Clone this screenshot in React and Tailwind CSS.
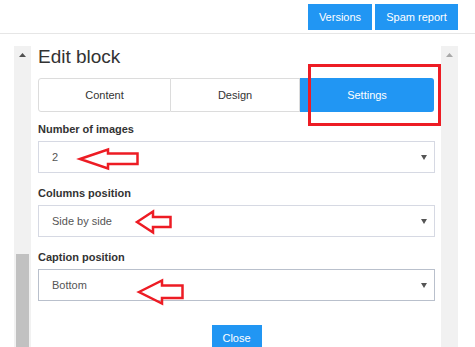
import React from "react";

const fields = [
    {label: "Number of images", value: "2"},
    {label: "Columns position", value: "Side by side"},
    {label: "Caption position", value: "Bottom", focused: true},
];

function UpArrow({className}) {
    return (
        <svg width="7" height="4" viewBox="0 0 7 4" className={className}>
            <path d="M0 4L3.5 0L7 4Z" fill="currentColor"/>
        </svg>
    );
}

function FakeSelect({value, focused}) {
    return (
        <div
            className={`h-[32px] flex items-center justify-between pl-[13px] pr-[7px] bg-white border ${focused ? "border-[#b9c0cc]" : "border-[#d6d9e3]"}`}>
            <span className="text-[11px] text-[#555]">{value}</span>
            <svg width="6" height="5" viewBox="0 0 6 5" className="text-[#555]">
                <path d="M0 0H6L3 5Z" fill="currentColor"/>
            </svg>
        </div>
    );
}

function Annotations() {
    // red marks drawn over the screenshot
    return (
        <svg className="absolute inset-0 pointer-events-none" width="475" height="347" viewBox="0 0 475 347">
            <rect x="309.5" y="65.5" width="130" height="59" fill="none" stroke="#ed1c24" strokeWidth="3"/>
            <polygon points="80,159 108,149.5 108,153.5 137.5,153.5 137.5,164 108,164 108,168.5" fill="none"
                     stroke="#ed1c24" strokeWidth="2.5"/>
            <polygon points="137,222 153,211.5 153,217 170.5,217 170.5,227 153,227 153,232.5" fill="none"
                     stroke="#ed1c24" strokeWidth="2.5"/>
            <polygon points="139,292 162,280.5 162,285.5 182.5,285.5 182.5,298 162,298 162,303.5" fill="none"
                     stroke="#ed1c24" strokeWidth="2.5"/>
        </svg>
    );
}

export default function App() {
    return (
        <div className="relative w-[475px] h-[347px] overflow-hidden bg-white text-[#333]"
             style={{fontFamily: '"Liberation Sans", Arial, sans-serif'}}>
            <div className="h-[34px] flex justify-end gap-[3px] pt-[4px] pr-[17px] border-b border-[#e6e6e6]">
                <button className="h-[26px] w-[64px] bg-[#2196f3] text-white text-[11px]">Versions</button>
                <button className="h-[26px] w-[83px] bg-[#2196f3] text-white text-[11px]">Spam report</button>
            </div>

            <div className="flex pt-[12px] pl-[14px] h-[313px]">
                <div className="w-[17px] bg-[#f1f1f1] flex flex-col items-center">
                    <UpArrow className="mt-[7px] text-[#505050]"/>
                    <div className="mt-auto w-[13px] h-[93px] bg-[#c1c1c1]"/>
                </div>

                <div className="w-[410px] pl-[7px] pr-[6px]">
                    <h1 className="text-[19px] leading-[21px] text-[#333]">Edit block</h1>

                    <div className="mt-[11px] flex h-[34px] text-[11px]">
                        <div className="w-[133px] flex items-center justify-center border border-[#dcdcdc] rounded-l-[3px]">
                            Content
                        </div>
                        <div className="w-[129px] flex items-center justify-center border border-l-0 border-[#dcdcdc]">
                            Design
                        </div>
                        <div className="flex-1 mr-px flex items-center justify-center bg-[#2196f3] text-white rounded-r-[3px]">
                            Settings
                        </div>
                    </div>

                    <div className="mt-[11px] flex flex-col gap-[14px]">
                        {fields.map((f) => (
                            <div key={f.label}>
                                <label className="block text-[11px] leading-[13px] font-bold text-[#333]">{f.label}</label>
                                <div className="mt-[5px]">
                                    <FakeSelect value={f.value} focused={f.focused}/>
                                </div>
                            </div>
                        ))}
                    </div>

                    <div className="mt-[24px] flex justify-center">
                        <button className="h-[26px] w-[50px] bg-[#2196f3] text-white text-[11px]">Close</button>
                    </div>
                </div>

                <div className="w-[17px] bg-[#f1f1f1] flex flex-col items-center">
                    <UpArrow className="mt-[7px] text-[#a8a8a8]"/>
                </div>
            </div>

            <Annotations/>
        </div>
    );
}
